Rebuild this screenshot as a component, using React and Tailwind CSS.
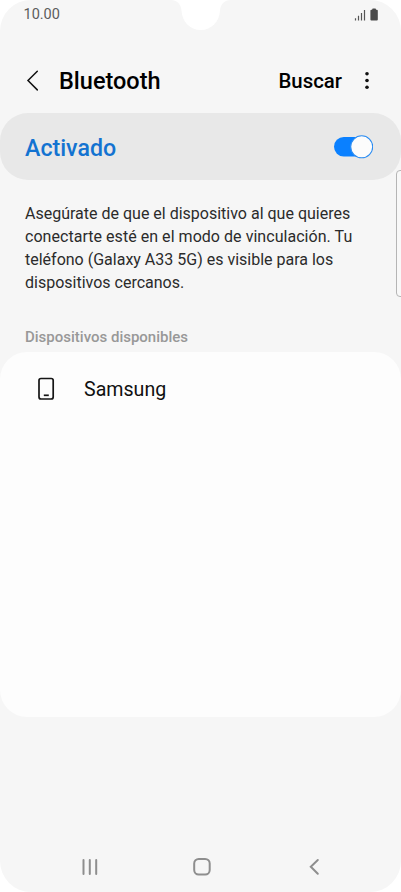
import { useState } from 'react'

const DEVICES = [{ id: 1, name: 'Samsung' }];

function Notch() {
  return (
    <svg className="absolute left-[171px] top-0" width="60" height="31" viewBox="0 0 60 31">
      <path d="M0 0 C6 0 10 4.500 10.500 10.500 C11.200 22 19 30 29.700 30 C40.500 30 48.300 22 49 10.500 C49.500 4.500 53.500 0 59.500 0 Z" fill="#ffffff" />
    </svg>
  );
}

function StatusBar() {
  return (
    <div className="flex h-12 items-start justify-between pl-[23.500px] pr-[22.500px]">
      <span className="mt-[5px] text-[14.5px] leading-[20px] text-[#5c5c5c]">10.00</span>
      <div className="mt-2 flex items-end gap-1">
        <svg width="12" height="12" viewBox="0 0 12 12" stroke="#555555" strokeWidth="1.2">
          <path d="M1.500 11.500V9.200M4.500 11.500V6.700M7.500 11.500V4M10.500 11.500V1" />
        </svg>
        <svg width="9" height="13" viewBox="0 0 9 13" fill="#4a4a4a">
          <rect x="2.300" y="0.600" width="3.600" height="2.500" rx="0.600" />
          <rect x="0.400" y="1.700" width="7.400" height="10.800" rx="1" />
        </svg>
      </div>
    </div>
  );
}

function Header() {
  return (
    <header className="flex h-[65px] items-center pl-[26px] pr-[30px] text-black">
      <svg width="14" height="22" viewBox="0 0 14 22" fill="none" stroke="#111111" strokeWidth="1.5" strokeLinecap="round">
        <path d="M11.300 1.300L2 10.500L11.300 19.900" />
      </svg>
      <h1 className="ml-[19px] flex-1 text-[23.500px] font-medium leading-8">Bluetooth</h1>
      <button className="text-[20.400px] font-medium leading-8">Buscar</button>
      <svg className="ml-[21px]" width="8" height="20" viewBox="0 0 8 20" fill="#111111">
        <circle cx="4" cy="2.800" r="1.800" />
        <circle cx="4" cy="9.500" r="1.800" />
        <circle cx="4" cy="16.200" r="1.800" />
      </svg>
    </header>
  );
}

function Toggle({ on, onChange }) {
  return (
    <button onClick={() => onChange(!on)} className="flex h-[23px] w-[40px] items-center">
      <svg width="40" height="24" viewBox="0 0 40 24">
        <rect x="1" y="2" width="37" height="19.500" rx="9.750" fill={on ? '#0a80ff' : '#9a9a9a'} />
        <circle cx={on ? 28.700 : 11.500} cy="11.800" r="11" fill="#fcfcfc" stroke={on ? '#2b8cf2' : '#9a9a9a'} strokeWidth="1.100" />
      </svg>
    </button>
  );
}

function DeviceRow({ device }) {
  return (
    <li className="flex h-[73px] items-center pl-[37px]">
      <svg width="18" height="24" viewBox="0 0 18 24" fill="none" stroke="#151515" strokeWidth="1.700">
        <rect x="2" y="1.500" width="14.200" height="20.500" rx="2" />
        <path d="M6.800 18.300h5" />
      </svg>
      <span className="ml-[29px] mt-[3px] text-[19.600px] leading-7 text-[#101010]">{device.name}</span>
    </li>
  );
}

function NavBar() {
  return (
    <nav className="mt-auto grid h-[51px] grid-cols-[89px_112px_1fr] text-[#8e8e8e]">
      <svg className="ml-[80px]" width="20" height="51" viewBox="0 0 20 51" fill="none" stroke="currentColor" strokeWidth="2" strokeLinecap="round">
        <path d="M3.500 19v14M9.800 19v14M16.200 19v14" />
      </svg>
      <svg className="ml-[103px]" width="20" height="51" viewBox="0 0 20 51" fill="none" stroke="currentColor" strokeWidth="2">
        <rect x="2.200" y="18" width="15.500" height="15.500" rx="4.500" />
      </svg>
      <svg className="ml-[106px]" width="14" height="51" viewBox="0 0 14 51" fill="none" stroke="currentColor" strokeWidth="2" strokeLinecap="round">
        <path d="M10.800 19L3.800 25.700L10.800 32.700" />
      </svg>
    </nav>
  );
}

function App() {
  const [enabled, setEnabled] = useState(true);

  return (
    <div className="h-[892px] w-[401px] overflow-hidden bg-white font-['Roboto',sans-serif]">
      <div className="relative flex h-full flex-col overflow-hidden rounded-[31px] bg-[#f6f6f6]">
        <Notch />
        <StatusBar />
        <Header />

        <section className="flex h-[67px] shrink-0 items-center justify-between rounded-[28px] bg-[#e8e8e8] pl-[25px] pr-[28px]">
          <span className="mt-[3px] text-[23.200px] font-medium leading-8 text-[#1373d1]">Activado</span>
          <Toggle on={enabled} onChange={setEnabled} />
        </section>

        <p className="mt-[22px] whitespace-nowrap pl-[25px] text-[16px] leading-[23px] text-[#2b2b2b]">
          Asegúrate de que el dispositivo al que quieres<br />
          <span className="tracking-[0.04px]">conectarte esté en el modo de vinculación. Tu</span><br />
          teléfono (Galaxy A33 5G) es visible para los<br />
          dispositivos cercanos.
        </p>

        <h2 className="mt-[33px] pl-[25px] text-[15px] font-medium leading-5 text-[#989898]">Dispositivos disponibles</h2>

        <ul className="mt-[5px] h-[365px] shrink-0 rounded-[27px] bg-[#fdfdfd]">
          {DEVICES.map(d => <DeviceRow key={d.id} device={d} />)}
        </ul>

        <NavBar />

        {/* edge panel handle */}
        <div className="absolute -right-1 top-[170px] h-[127px] w-[9px] rounded-[4px] border border-[#b5b5b5] bg-[#f8f8f8]"></div>
      </div>
    </div>
  )
}

export default App
